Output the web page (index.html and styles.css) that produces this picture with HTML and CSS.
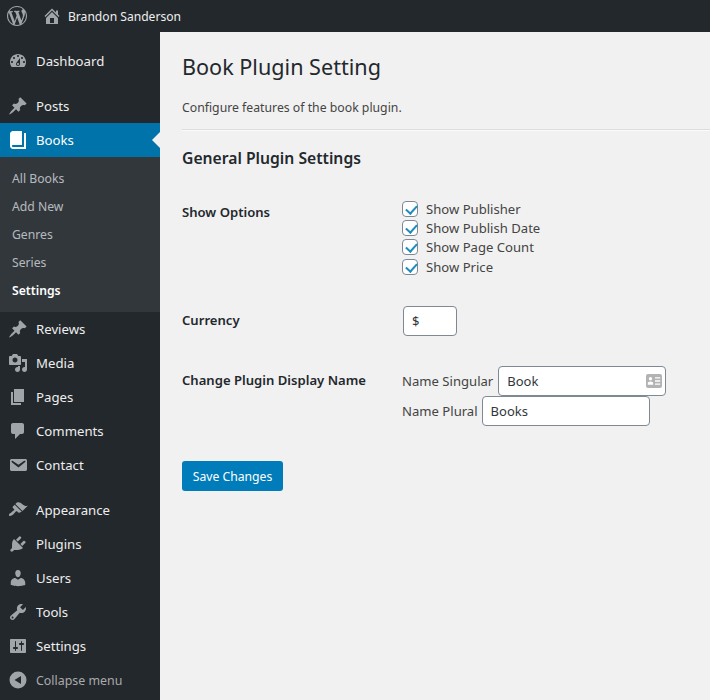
FILE: index.html
```html
<!DOCTYPE html>
<html lang="en">
<head>
    <meta charset="UTF-8" />
    <title>Book Plugin Setting</title>
    <link rel="stylesheet" href="styles.css">
</head>
<body>
    <header class="adminbar">
        <svg class="bar-logo" viewBox="0 0 20 20"><path d="M20 10c0-5.51-4.49-10-10-10C4.48 0 0 4.49 0 10c0 5.52 4.48 10 10 10 5.51 0 10-4.48 10-10zM7.78 15.37L4.37 6.22c.55-.02 1.17-.08 1.17-.08.5-.06.44-1.13-.06-1.11 0 0-1.45.11-2.37.11-.18 0-.37 0-.58-.01C4.12 2.69 6.87 1.11 10 1.11c2.33 0 4.45.87 6.05 2.34-.68-.11-1.65.39-1.65 1.58 0 .74.45 1.36.9 2.1.35.61.55 1.36.55 2.46 0 1.49-1.4 5-1.4 5l-3.03-8.37c.54-.02.82-.17.82-.17.5-.05.44-1.25-.06-1.22 0 0-1.44.12-2.38.12-.87 0-2.33-.12-2.33-.12-.5-.03-.56 1.2-.06 1.22l.92.08 1.26 3.41zM17.41 10c.24-.64.74-1.87.43-4.25.7 1.29 1.05 2.71 1.05 4.25 0 3.29-1.73 6.24-4.4 7.78.97-2.59 1.94-5.2 2.92-7.78zM6.1 18.09C3.12 16.65 1.11 13.53 1.11 10c0-1.3.23-2.48.72-3.59C3.25 10.3 4.67 14.2 6.1 18.09zm4.03-6.63l2.58 6.98c-.86.29-1.76.45-2.71.45-.79 0-1.57-.11-2.29-.33.81-2.38 1.62-4.74 2.42-7.1z"/></svg>
        <svg class="bar-home" viewBox="0 0 20 20"><path d="M16 8.5l1.53 1.53-1.06 1.06L10 4.62l-6.47 6.47-1.06-1.06L10 2.5l4 4v-2h2v4zm-6-2.46l6 5.99V18H4v-5.97zM12 17v-5H8v5h4z"/></svg>
        <a href="#" class="bar-site">Brandon Sanderson</a>
    </header>

    <div class="wrap">
        <nav class="sidebar">
            <a href="#" class="menu-item gap-after">
                <svg viewBox="0 0 20 20"><path fill-rule="evenodd" d="M3.76 16h12.48c1.1-1.37 1.76-3.11 1.76-5 0-4.42-3.58-8-8-8s-8 3.58-8 8c0 1.89.66 3.63 1.76 5zM10 4c.55 0 1 .45 1 1s-.45 1-1 1-1-.45-1-1 .45-1 1-1zM6 6c.55 0 1 .45 1 1s-.45 1-1 1-1-.45-1-1 .45-1 1-1zm8 0c.55 0 1 .45 1 1s-.45 1-1 1-1-.45-1-1 .45-1 1-1zm-5.37 5.55L12 7v6c0 1.1-.9 2-2 2s-2-.9-2-2c0-.57.24-1.08.63-1.45zM4 10c.55 0 1 .45 1 1s-.45 1-1 1-1-.45-1-1 .45-1 1-1zm12 0c.55 0 1 .45 1 1s-.45 1-1 1-1-.45-1-1 .45-1 1-1zm-5 3c0-.55-.45-1-1-1s-1 .45-1 1 .45 1 1 1 1-.45 1-1z"/></svg>
                Dashboard
            </a>
            <a href="#" class="menu-item">
                <svg viewBox="0 0 20 20"><path d="M10.44 3.02l1.82-1.82 6.36 6.35-1.83 1.82c-1.05-.68-2.48-.57-3.41.36l-.75.75c-.92.93-1.04 2.35-.35 3.41l-1.83 1.82-2.41-2.41-2.8 2.79c-.42.42-3.38 2.71-3.8 2.29s1.86-3.39 2.28-3.81l2.79-2.79L4.1 9.36l1.83-1.82c1.05.69 2.48.57 3.4-.36l.75-.75c.93-.92 1.05-2.35.36-3.41z"/></svg>
                Posts
            </a>
            <a href="#" class="menu-item current">
                <svg viewBox="0 0 20 20"><path d="M16 3h2v16H5c-1.66 0-3-1.34-3-3V4c0-1.66 1.34-3 3-3h9v14H5c-.55 0-1 .45-1 1s.45 1 1 1h11V3z"/></svg>
                Books
            </a>
            <div class="submenu">
                <a href="#">All Books</a>
                <a href="#">Add New</a>
                <a href="#">Genres</a>
                <a href="#">Series</a>
                <a href="#" class="active">Settings</a>
            </div>
            <a href="#" class="menu-item">
                <svg viewBox="0 0 20 20"><path d="M10.44 3.02l1.82-1.82 6.36 6.35-1.83 1.82c-1.05-.68-2.48-.57-3.41.36l-.75.75c-.92.93-1.04 2.35-.35 3.41l-1.83 1.82-2.41-2.41-2.8 2.79c-.42.42-3.38 2.71-3.8 2.29s1.86-3.39 2.28-3.81l2.79-2.79L4.1 9.36l1.83-1.82c1.05.69 2.48.57 3.4-.36l.75-.75c.93-.92 1.05-2.35.36-3.41z"/></svg>
                Reviews
            </a>
            <a href="#" class="menu-item">
                <svg viewBox="0 0 20 20"><path fill-rule="evenodd" d="M13 11V4c0-.55-.45-1-1-1h-1.67L9 1H5L3.67 3H2c-.55 0-1 .45-1 1v7c0 .55.45 1 1 1h10c.55 0 1-.45 1-1zM7 4.5c1.38 0 2.5 1.12 2.5 2.5S8.38 9.5 7 9.5 4.5 8.38 4.5 7 5.62 4.5 7 4.5zM14 6h5v10.5c0 1.38-1.12 2.5-2.5 2.5S14 17.88 14 16.5s1.12-2.5 2.5-2.5c.17 0 .34.02.5.05V9h-3V6zm-4 8.05V13h2v3.5c0 1.38-1.12 2.5-2.5 2.5S7 17.88 7 16.5 8.12 14 9.5 14c.17 0 .34.02.5.05z"/></svg>
                Media
            </a>
            <a href="#" class="menu-item">
                <svg viewBox="0 0 20 20"><path d="M6 15V2h10v13H6zm-1 1h8v2H3V5h2v11z"/></svg>
                Pages
            </a>
            <a href="#" class="menu-item">
                <svg viewBox="0 0 20 20"><path d="M5 2h9c1.1 0 2 .9 2 2v7c0 1.1-.9 2-2 2h-2l-5 5v-5H5c-1.1 0-2-.9-2-2V4c0-1.1.9-2 2-2z"/></svg>
                Comments
            </a>
            <a href="#" class="menu-item gap-after">
                <svg viewBox="0 0 20 20"><path d="M3.87 4h13.25C18.37 4 19 4.59 19 5.79v8.42c0 1.19-.63 1.79-1.88 1.79H3.87c-1.25 0-1.88-.6-1.88-1.79V5.79c0-1.2.63-1.79 1.88-1.79zm6.62 8.6l6.74-5.53c.24-.2.43-.66.13-1.07-.29-.41-.82-.42-1.17-.17l-5.7 3.86L4.8 6c-.35-.25-.88-.24-1.17.17-.3.41-.11.87.13 1.07z"/></svg>
                Contact
            </a>
            <a href="#" class="menu-item">
                <svg viewBox="0 0 20 20"><path d="M14.48 11.06L7.41 3.99l1.5-1.5c.5-.56 2.3-.47 3.51.32 1.21.8 1.43 1.28 2.91 2.1 1.18.64 2.45 1.26 4.45.85zm-.71.71L6.7 4.7 4.93 6.47c-.39.39-.39 1.02 0 1.41l1.06 1.06c.39.39.39 1.03 0 1.42-.6.6-1.43 1.11-2.21 1.69-.35.26-.7.53-1.01.84C1.43 13.23.4 14.95 1.2 15.71c.8.79 2.74-.14 3.95-1.14.33-.27.63-.61.93-.95.63-.7 1.16-1.54 1.77-2.15.4-.39 1.03-.39 1.42 0l1.06 1.06c.39.39 1.02.39 1.41 0z"/></svg>
                Appearance
            </a>
            <a href="#" class="menu-item">
                <svg viewBox="0 0 20 20"><path d="M13.11 4.36L9.87 7.6 8 5.73l3.24-3.24c.35-.34 1.05-.2 1.56.32.52.51.66 1.21.31 1.55zm-8 1.77l.91-1.12 9.01 9.01-1.19.84c-.71.71-2.63 1.16-3.82 1.16H6.14L4.9 17.26c-.59.59-1.54.59-2.12 0-.59-.58-.59-1.53 0-2.12l1.24-1.24v-3.88c0-1.13.4-3.19 1.09-3.89zm7.26 3.97l3.24-3.24c.34-.35 1.04-.21 1.55.31.52.51.66 1.21.31 1.55l-3.24 3.25z"/></svg>
                Plugins
            </a>
            <a href="#" class="menu-item">
                <svg viewBox="0 0 20 20"><path d="M10 9.25c-2.27 0-2.73-3.44-2.73-3.44C7 4.02 7.82 2 9.97 2c2.16 0 2.98 2.02 2.71 3.81 0 0-.41 3.44-2.68 3.44zm0 2.57L12.72 10c2.39 0 4.52 2.33 4.52 4.53v2.49s-3.65 1.13-7.24 1.13c-3.65 0-7.24-1.13-7.24-1.13v-2.49c0-2.25 1.94-4.48 4.47-4.48z"/></svg>
                Users
            </a>
            <a href="#" class="menu-item">
                <svg viewBox="0 0 20 20"><path fill-rule="evenodd" d="M16.68 9.77c-1.34 1.34-3.3 1.67-4.95.99l-5.41 6.52c-.99.99-2.59.99-3.58 0s-.99-2.59 0-3.57l6.52-5.42c-.68-1.65-.35-3.61.99-4.95 1.28-1.28 3.12-1.62 4.72-1.06l-2.89 2.89 2.82 2.82 2.86-2.87c.53 1.58.18 3.39-1.08 4.65zM3.81 16.21c.4.39 1.04.39 1.43 0 .4-.4.4-1.04 0-1.43-.39-.4-1.03-.4-1.43 0-.39.39-.39 1.03 0 1.43z"/></svg>
                Tools
            </a>
            <a href="#" class="menu-item">
                <svg viewBox="0 0 20 20"><path fill-rule="evenodd" d="M18 16V4c0-.55-.45-1-1-1H3c-.55 0-1 .45-1 1v12c0 .55.45 1 1 1h14c.55 0 1-.45 1-1zM8 11h1c.55 0 1 .45 1 1s-.45 1-1 1H8v1.5c0 .28-.22.5-.5.5s-.5-.22-.5-.5V13H6c-.55 0-1-.45-1-1s.45-1 1-1h1V5.5c0-.28.22-.5.5-.5s.5.22.5.5V11zm5-2h-1c-.55 0-1-.45-1-1s.45-1 1-1h1V5.5c0-.28.22-.5.5-.5s.5.22.5.5V7h1c.55 0 1 .45 1 1s-.45 1-1 1h-1v5.5c0 .28-.22.5-.5.5s-.5-.22-.5-.5V9z"/></svg>
                Settings
            </a>
            <a href="#" class="menu-item collapse">
                <svg viewBox="0 0 20 20"><path fill-rule="evenodd" d="M10 1.5a8.5 8.5 0 1 1 0 17 8.5 8.5 0 0 1 0-17zM13 6l-6.5 4 6.5 4z"/></svg>
                Collapse menu
            </a>
        </nav>

        <main class="content">
            <h1>Book Plugin Setting</h1>
            <p class="desc">Configure features of the book plugin.</p>
            <hr>
            <h2>General Plugin Settings</h2>

            <form class="settings-form">
                <div class="form-row row-options">
                    <div class="row-label">Show Options</div>
                    <div class="check-list">
                        <label class="check"><input type="checkbox" checked>Show Publisher</label>
                        <label class="check"><input type="checkbox" checked>Show Publish Date</label>
                        <label class="check"><input type="checkbox" checked>Show Page Count</label>
                        <label class="check"><input type="checkbox" checked>Show Price</label>
                    </div>
                </div>
                <div class="form-row row-currency">
                    <div class="row-label">Currency</div>
                    <div><input type="text" class="field field-small" value="$"></div>
                </div>
                <div class="form-row row-names">
                    <div class="row-label">Change Plugin Display Name</div>
                    <div class="name-fields">
                        <label class="name-field">Name Singular
                            <span class="field-wrap">
                                <input type="text" class="field" value="Book">
                                <svg class="field-icon" viewBox="0 0 16 14"><path fill-rule="evenodd" d="M2 0h12a2 2 0 0 1 2 2v10a2 2 0 0 1-2 2H2a2 2 0 0 1-2-2V2a2 2 0 0 1 2-2zm2.500 3a1.700 1.700 0 1 0 0 3.400 1.700 1.700 0 0 0 0-3.400zM1.800 10.800h5.400V9.400c0-1-1-1.800-2.700-1.800s-2.700.8-2.700 1.800zM9 3.200v1.400h5.200V3.200zM9 6.300v1.400h5.200V6.300zM9 9.400v1.400h5.200V9.400z"/></svg>
                            </span>
                        </label>
                        <label class="name-field">Name Plural
                            <input type="text" class="field" value="Books">
                        </label>
                    </div>
                </div>
                <button type="button" class="btn">Save Changes</button>
            </form>
        </main>
    </div>
</body>
</html>
```

FILE: styles.css
```css
* {
    margin: 0;
    padding: 0;
    box-sizing: border-box;
    font-family: "Noto Sans", Arial, sans-serif;
}
html, body { height: 700px; overflow: hidden; }
body {
    background-color: #f1f1f1;
    color: #444;
    font-size: 13px;
}
a { text-decoration: none; }

.adminbar {
    height: 32px;
    background: #23282d;
    display: flex;
    align-items: center;
}
.adminbar svg { fill: #a0a5aa; }
.bar-logo { width: 20px; height: 20px; margin-left: 7px; }
.bar-home { width: 20px; height: 20px; margin-left: 15px; }
.bar-site { color: #eee; font-size: 12.1px; margin-left: 6px; }

.wrap { display: flex; height: 668px; }

.sidebar {
    width: 160px;
    flex: none;
    background: #23282d;
    padding-top: 12px;
}
.menu-item {
    display: flex;
    align-items: center;
    height: 34px;
    padding-left: 8px;
    color: #eee;
    font-size: 13.2px;
}
.menu-item svg {
    width: 20px;
    height: 20px;
    margin-right: 8px;
    fill: #a0a5aa;
}
.gap-after { margin-bottom: 11px; }
.menu-item.current {
    position: relative;
    background: #0073aa;
    color: #fff;
}
.menu-item.current svg { fill: #fff; }
.menu-item.current::after {
    content: "";
    position: absolute;
    right: 0;
    top: 9px;
    border: 8px solid transparent;
    border-left-width: 0;
    border-right-color: #f1f1f1;
}
.menu-item.collapse { color: #aaa; font-size: 12.4px; }

.submenu {
    background: #32373c;
    padding: 8px 0 7px;
}
.submenu a {
    display: block;
    height: 28px;
    line-height: 28px;
    padding-left: 12px;
    font-size: 12.2px;
    color: rgba(240, 245, 250, 0.7);
}
.submenu a.active { color: #fff; font-weight: 600; }

.content {
    flex: 1;
    padding: 0 0 0 22px;
}
h1 {
    font-size: 21.6px;
    font-weight: 400;
    line-height: 30px;
    color: #23282d;
    margin-top: 20px;
}
.desc { font-size: 12.25px; line-height: 18px; margin-top: 17px; }
hr {
    border: 0;
    border-top: 1px solid #ddd;
    border-bottom: 1px solid #fafafa;
    margin-top: 12px;
}
h2 {
    font-size: 15.7px;
    font-weight: 600;
    line-height: 22px;
    color: #23282d;
    margin-top: 16px;
}

.form-row { display: grid; grid-template-columns: 220px 1fr; }
.row-label { font-weight: 600; font-size: 13.1px; color: #23282d; line-height: 18px; }
.row-options { margin-top: 30px; }
.row-options .row-label { margin-top: 4px; }
.check-list { display: flex; flex-direction: column; }
.check {
    display: flex;
    align-items: center;
    height: 19.33px;
    font-size: 13.1px;
    color: #444;
}
.check input {
    appearance: none;
    width: 16px;
    height: 16px;
    margin-right: 8px;
    background: #fff;
    border: 1px solid #7e8993;
    border-radius: 4px;
    position: relative;
}
.check input::before {
    content: "";
    position: absolute;
    left: 4.5px;
    top: 1px;
    width: 5px;
    height: 9px;
    border: solid #1e8cbe;
    border-width: 0 2.5px 2.5px 0;
    transform: rotate(42deg);
}

.field {
    width: 168px;
    height: 30px;
    padding: 0 8px;
    background: #fff;
    border: 1px solid #7e8993;
    border-radius: 4px;
    color: #32373c;
    font-size: 13px;
}
.field-small { width: 54px; margin-left: 1px; }
.row-currency { margin-top: 30px; }
.row-currency .row-label { margin-top: 5px; }
.row-names { margin-top: 30px; }
.row-names .row-label { margin-top: 5px; }
.name-field {
    display: flex;
    align-items: center;
    gap: 4px;
    font-size: 13.1px;
    color: #444;
    height: 30px;
}
.field-wrap { position: relative; display: block; height: 30px; margin-left: 1px; }
.field-icon {
    position: absolute;
    right: 4px;
    top: 8px;
    width: 16px;
    height: 14px;
    fill: #b3b3b3;
}

.btn {
    display: block;
    width: 101px;
    height: 30px;
    margin-top: 35px;
    background-color: #007cba;
    color: #fff;
    border: 0;
    border-radius: 3px;
    font-size: 12.2px;
}
```
